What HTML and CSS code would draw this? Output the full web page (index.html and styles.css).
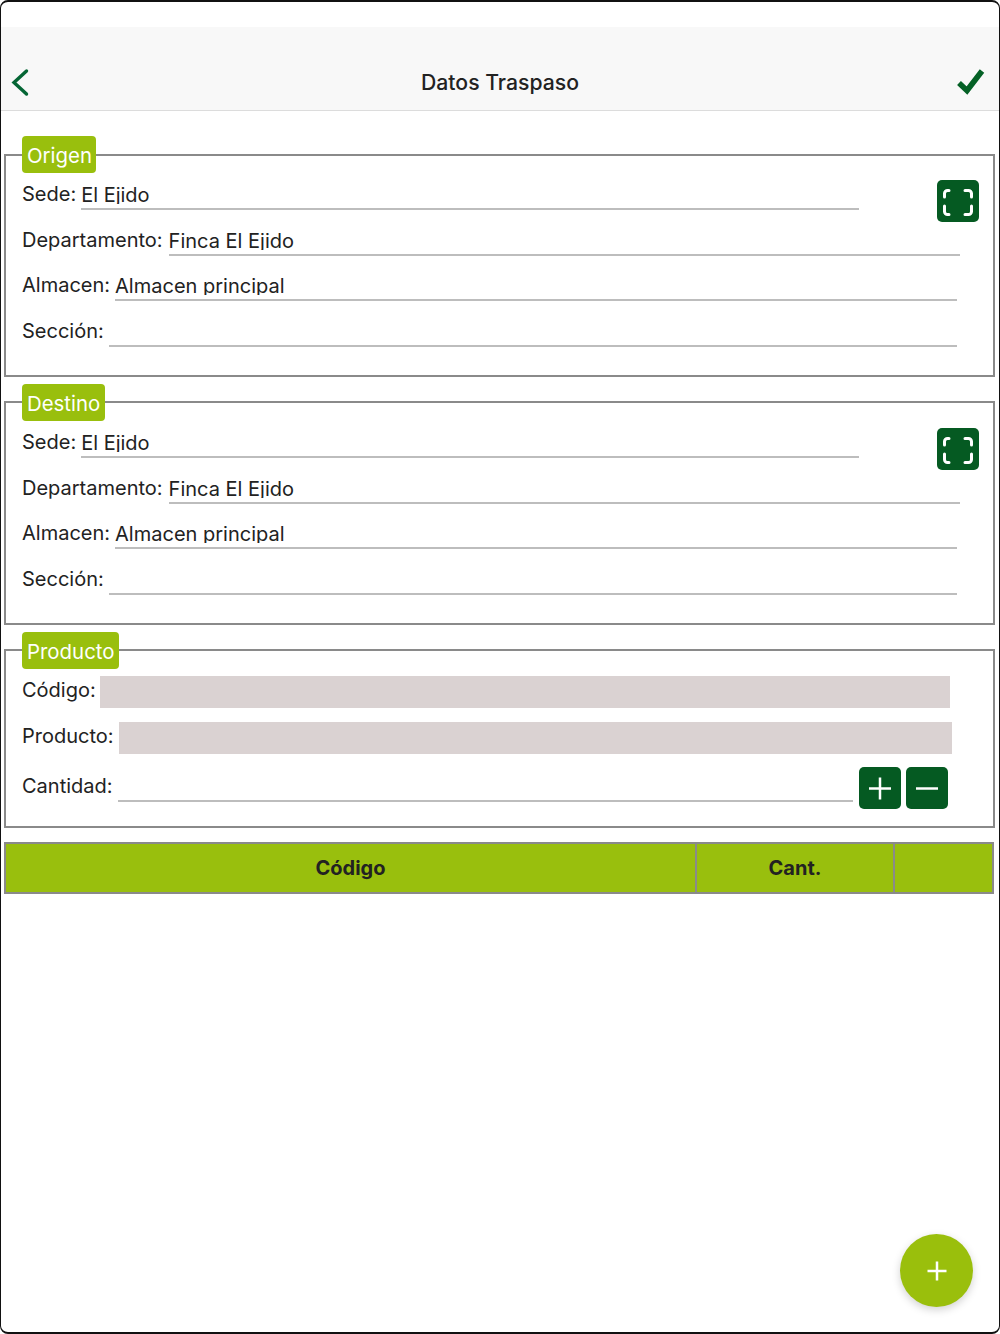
FILE: index.html
```html
<!DOCTYPE html>
<html lang="es">
<head>
<meta charset="utf-8">
<title>Datos Traspaso</title>
<link rel="stylesheet" href="styles.css">
</head>
<body>
<div class="screen">
  <div class="status"></div>
  <header class="nav">
    <svg class="nav-icon nav-back" viewBox="0 0 30 30"><path class="chev" d="M17.5 4 L5 15.5 L17.5 27"/></svg>
    <h1 class="title">Datos Traspaso</h1>
    <svg class="nav-icon nav-ok" viewBox="0 0 30 30"><path class="check" d="M3 16 L11 23.5 L26 4"/></svg>
  </header>
  <main class="content">
    <fieldset class="group">
      <legend class="badge">Origen</legend>
      <div class="rows">
        <div class="row">
          <span class="label">Sede:</span><span class="field field-short"><span class="value">El Ejido</span></span>
          <button class="btn btn-scan" type="button"><svg class="btn-icon" viewBox="0 0 42 42"><path class="scan" d="M7.5 17 V13.5 a3 3 0 0 1 3-3 H12 M28 10.5 H31.5 a3 3 0 0 1 3 3 V17 M34.5 26 V31.5 a3 3 0 0 1 -3 3 H28 M12 34.5 H10.5 a3 3 0 0 1 -3-3 V26"/></svg></button>
        </div>
        <div class="row row-dep"><span class="label">Departamento:</span><span class="field"><span class="value">Finca El Ejido</span></span></div>
        <div class="row row-in"><span class="label">Almacen:</span><span class="field"><span class="value">Almacen principal</span></span></div>
        <div class="row row-in"><span class="label">Sección:</span><span class="field"><span class="value"></span></span></div>
      </div>
    </fieldset>
    <fieldset class="group">
      <legend class="badge">Destino</legend>
      <div class="rows">
        <div class="row">
          <span class="label">Sede:</span><span class="field field-short"><span class="value">El Ejido</span></span>
          <button class="btn btn-scan" type="button"><svg class="btn-icon" viewBox="0 0 42 42"><path class="scan" d="M7.5 17 V13.5 a3 3 0 0 1 3-3 H12 M28 10.5 H31.5 a3 3 0 0 1 3 3 V17 M34.5 26 V31.5 a3 3 0 0 1 -3 3 H28 M12 34.5 H10.5 a3 3 0 0 1 -3-3 V26"/></svg></button>
        </div>
        <div class="row row-dep"><span class="label">Departamento:</span><span class="field"><span class="value">Finca El Ejido</span></span></div>
        <div class="row row-in"><span class="label">Almacen:</span><span class="field"><span class="value">Almacen principal</span></span></div>
        <div class="row row-in"><span class="label">Sección:</span><span class="field"><span class="value"></span></span></div>
      </div>
    </fieldset>
    <fieldset class="group group-product">
      <legend class="badge">Producto</legend>
      <div class="product-rows">
        <div class="row-fill row-code"><span class="label">Código:</span><span class="fill"></span></div>
        <div class="row-fill row-prod"><span class="label">Producto:</span><span class="fill"></span></div>
        <div class="row-qty">
          <span class="label">Cantidad:</span><span class="field"></span>
          <div class="qty-btns">
            <button class="btn" type="button"><svg class="btn-icon" viewBox="0 0 42 42"><path class="sign" d="M10 21.5 H32 M21 10.5 V32.5"/></svg></button>
            <button class="btn" type="button"><svg class="btn-icon" viewBox="0 0 42 42"><path class="sign" d="M10 21.5 H32"/></svg></button>
          </div>
        </div>
      </div>
    </fieldset>
    <table class="grid">
      <thead><tr><th class="col-code">Código</th><th class="col-qty">Cant.</th><th></th></tr></thead>
    </table>
  </main>
  <button class="fab" type="button"><svg class="fab-icon" viewBox="0 0 20 20"><path class="sign" d="M0.5 10 H19.5 M10 0.5 V19.5"/></svg></button>
</div>
</body>
</html>
```
FILE: styles.css
```css
* { box-sizing: border-box; }
html, body { margin: 0; padding: 0; background: #fff; }
body { font-family: Inter, "Liberation Sans", sans-serif; color: #222; font-size: 20px; }

.screen {
  position: relative;
  width: 1000px;
  height: 1334px;
  border: 1px solid #111;
  border-width: 2px 1px 2px 1px;
  border-radius: 8px;
  overflow: hidden;
  background: #fff;
}
.status { height: 25px; }
.nav {
  height: 84px;
  background: #f8f8f8;
  border-bottom: 1px solid #dcdcdc;
  display: grid;
  grid-template-columns: 1fr auto 1fr;
  align-items: center;
  padding: 26px 8px 0 8px;
}
.nav-icon { width: 30px; height: 30px; }
.nav-ok { justify-self: end; margin-right: 5px; }
.chev { fill: none; stroke: #056635; stroke-width: 3.4; stroke-linecap: round; stroke-linejoin: miter; }
.check { fill: none; stroke: #056126; stroke-width: 5.6; stroke-linecap: butt; stroke-linejoin: miter; }
.title { margin: 0; font-size: 21.2px; font-weight: 500; color: #222; }

.content { padding: 0 4px 0 3px; }
.group {
  margin: 7px 0 0;
  padding: 11px 33px 28px 16px;
  border: 2px solid #8a8a8a;
  min-width: 0;
}
.group:first-child { margin-top: 25px; }
.group-product { padding: 11px 41px 17px 16px; }
.badge {
  background: #99bf0d;
  color: #fff;
  font-size: 20.4px;
  line-height: 25px;
  padding: 7px 4.5px 5px 5px;
  border-radius: 4px;
  margin: 0 0 -4px;
}
.rows { display: flex; flex-direction: column; gap: 15.67px; }
.row, .row-qty, .row-fill { display: flex; align-items: flex-start; gap: 5px; }
.row { height: 30px; }
.row-in { padding-right: 3px; }
.row-dep { gap: 6px; }
.label { white-space: nowrap; line-height: 28px; }
.field {
  flex: 1;
  height: 30px;
  border-bottom: 2px solid #bdbdbd;
  min-width: 0;
}
.field-short { flex: 0 0 778px; }
.value { display: block; height: 24px; overflow: hidden; line-height: 30px; }

.btn {
  width: 42px;
  height: 42px;
  padding: 0;
  border: 0;
  border-radius: 5px;
  background: #055a22;
  flex: none;
}
.btn-scan { margin-left: 73px; margin-bottom: -12px; }
.btn-icon { display: block; width: 42px; height: 42px; }
.scan { fill: none; stroke: #fff; stroke-width: 3; stroke-linecap: round; }
.sign { fill: none; stroke: #fff; stroke-width: 2.5; }

.product-rows { display: flex; flex-direction: column; }
.row-fill { height: 32px; align-items: center; gap: 4px; }
.row-fill .label { padding-bottom: 4px; }
.row-prod { margin-top: 14px; gap: 5px; }
.row-code { padding-right: 2px; }
.fill { flex: 1; height: 32px; background: #dad2d2; }
.row-qty { margin-top: 13px; height: 42px; padding-right: 4px; }
.row-qty .label { margin-top: 5px; }
.row-qty .field { height: 35px; }
.qty-btns { display: flex; gap: 5px; margin-left: 1px; }

.grid {
  width: calc(100% - 1px);
  margin-top: 14px;
  border-collapse: collapse;
  table-layout: fixed;
  background: #99bf0d;
}
.grid th {
  height: 50px;
  border: 2.5px solid #8a8a8a;
  padding: 0;
  font-size: 20px;
  font-weight: 700;
  color: #222;
}
.col-code { width: 691px; }
.col-qty { width: 198px; }

.fab {
  position: absolute;
  left: 899px;
  top: 1232px;
  width: 73px;
  height: 73px;
  padding: 0;
  border: 0;
  border-radius: 50%;
  background: #9abf0c;
  box-shadow: 0 3px 8px rgba(0, 0, 0, 0.18);
  display: flex;
  align-items: center;
  justify-content: center;
}
.fab-icon { width: 20px; height: 20px; }
```
